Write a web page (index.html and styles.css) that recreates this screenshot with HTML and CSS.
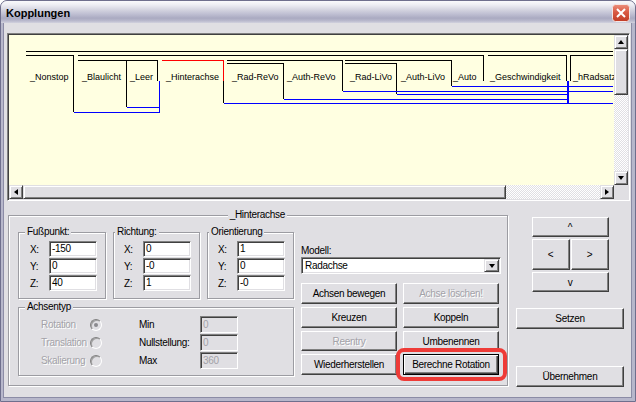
FILE: index.html
```html
<!DOCTYPE html>
<html>
<head>
<meta charset="utf-8">
<link rel="stylesheet" href="styles.css">
</head>
<body>
<div class="window">
  <div class="titlebar">
    <span class="title">Kopplungen</span>
    <span class="close">
      <svg width="18" height="18" viewBox="0 0 18 18">
        <defs>
          <linearGradient id="cg" x1="0" y1="0" x2="0" y2="1">
            <stop offset="0" stop-color="#ec8f7c"/>
            <stop offset="0.45" stop-color="#d95a43"/>
            <stop offset="1" stop-color="#c13c25"/>
          </linearGradient>
        </defs>
        <rect x="0.5" y="0.5" width="17" height="17" rx="3" fill="url(#cg)" stroke="#f4e6e4"/>
        <path d="M5 5L13 13M13 5L5 13" stroke="#fff" stroke-width="2"/>
      </svg>
    </span>
  </div>
  <div class="frame">
    <div class="client">
      <div class="diagram">
        <div class="canvas">
          <svg class="links" width="605" height="150" viewBox="9 35 605 150">
            <g class="ln black">
              <path d="M26 51.5H613"/>
              <path d="M26 55.5H73.5V112"/>
              <path d="M78 55.5H483.5V81"/>
              <path d="M488 55.5H566.5V81"/>
              <path d="M570.5 81V55.5H613"/>
              <path d="M78 60.5H157.5V81"/>
              <path d="M126.5 60.5V107"/>
              <path d="M227 60.5H342.5V91"/>
              <path d="M227 63.5H283.5V99"/>
              <path d="M345 60.5H451.5V86"/>
              <path d="M345 63.5H396.5V94"/>
              <path d="M223.5 81V103"/>
            </g>
            <g class="ln blue">
              <path d="M73.5 112.5H159.5V81"/>
              <path d="M126.5 107.5H159.5"/>
              <path d="M223.5 103.5H613"/>
              <path d="M283.5 99.5H568"/>
              <path d="M342.5 91.5H613"/>
              <path d="M396.5 94.5H568"/>
              <path d="M451.5 86.5H613"/>
              <path class="thick" d="M568 81V104"/>
            </g>
            <g class="ln red">
              <path d="M162 60.5H223.5V81"/>
            </g>
            <g class="node">
              <text x="30" y="80">_Nonstop</text>
              <text x="82" y="80">_Blaulicht</text>
              <text x="130" y="80">_Leer</text>
              <text x="166" y="80">_Hinterachse</text>
              <text x="232" y="80">_Rad-ReVo</text>
              <text x="287" y="80">_Auth-ReVo</text>
              <text x="350" y="80">_Rad-LiVo</text>
              <text x="401" y="80">_Auth-LiVo</text>
              <text x="453" y="80">_Auto</text>
              <text x="490" y="80">_Geschwindigkeit</text>
              <text x="573" y="80">_hRadsatz</text>
            </g>
          </svg>
        </div>
        <div class="vscroll">
          <div class="sbtn"><i class="tri up"></i></div>
          <div class="thumb v"></div>
          <div class="track"></div>
          <div class="sbtn"><i class="tri down"></i></div>
        </div>
        <div class="hscroll">
          <div class="sbtn"><i class="tri left"></i></div>
          <div class="thumb h"></div>
          <div class="track"></div>
          <div class="sbtn"><i class="tri right"></i></div>
        </div>
        <div class="corner"></div>
      </div>

      <div class="lower">
        <fieldset class="group main">
          <legend>_Hinterachse</legend>
          <div class="main-body">
            <div class="left-col">
              <div class="vec-row">
                <fieldset class="group vec f">
                  <legend>Fußpunkt:</legend>
                  <div class="vec-grid">
                    <span>X:</span><span class="field">-150</span>
                    <span>Y:</span><span class="field">0</span>
                    <span>Z:</span><span class="field">40</span>
                  </div>
                </fieldset>
                <fieldset class="group vec r">
                  <legend>Richtung:</legend>
                  <div class="vec-grid">
                    <span>X:</span><span class="field">0</span>
                    <span>Y:</span><span class="field">-0</span>
                    <span>Z:</span><span class="field">1</span>
                  </div>
                </fieldset>
                <fieldset class="group vec o">
                  <legend>Orientierung</legend>
                  <div class="vec-grid">
                    <span>X:</span><span class="field">1</span>
                    <span>Y:</span><span class="field">0</span>
                    <span>Z:</span><span class="field">-0</span>
                  </div>
                </fieldset>
              </div>
              <fieldset class="group achsen">
                <legend>Achsentyp</legend>
                <div class="achsen-grid">
                  <span class="dis">Rotation</span><span class="radio checked"></span><span>Min</span><span class="field dfield">0</span>
                  <span class="dis">Translation</span><span class="radio"></span><span>Nullstellung:</span><span class="field dfield">0</span>
                  <span class="dis">Skalierung</span><span class="radio"></span><span>Max</span><span class="field dfield">360</span>
                </div>
              </fieldset>
            </div>
            <div class="right-col">
              <div class="lbl">Modell:</div>
              <div class="combo"><span class="combo-text">Radachse</span><span class="ddbtn"><i class="tri down"></i></span></div>
              <div class="btn-grid">
                <div class="btn">Achsen bewegen</div>
                <div class="btn dis">Achse löschen!</div>
                <div class="btn">Kreuzen</div>
                <div class="btn">Koppeln</div>
                <div class="btn dis">Reentry</div>
                <div class="btn">Umbenennen</div>
                <div class="btn">Wiederherstellen</div>
                <div class="btn def">Berechne Rotation</div>
              </div>
            </div>
          </div>
        </fieldset>
        <div class="side">
          <div class="pad">
            <div class="btn wide">^</div>
            <div class="btn">&lt;</div>
            <div class="btn">&gt;</div>
            <div class="btn wide">v</div>
          </div>
          <div class="btn setzen">Setzen</div>
          <div class="btn uebern">Übernehmen</div>
        </div>
      </div>
    </div>
  </div>
</div>
</body>
</html>
```
FILE: styles.css
```css
* { box-sizing: border-box; }
html, body { margin: 0; padding: 0; }
body {
  width: 636px; height: 402px; overflow: hidden;
  background: #ffffff;
  font-family: "Liberation Sans", Arial, sans-serif;
  font-size: 10px; letter-spacing: -0.3px; color: #000;
}
.window {
  width: 636px; height: 402px;
  display: flex; flex-direction: column;
  border: 1px solid #6f6f8d;
  border-radius: 7px 7px 0 0;
  background: #b7b7cb;
  overflow: hidden;
}
.titlebar {
  height: 22px; flex: none;
  display: flex; align-items: center;
  padding: 2px 5px 0 5px;
  background: linear-gradient(to bottom, #fafafc 0%, #ededf3 18%, #d4d4e0 40%, #bcbcd0 62%, #aaaac1 78%, #b9b9cd 90%, #d2d2de 100%);
}
.title { font-weight: bold; font-size: 11px; letter-spacing: 0; color: #000; }
.close { margin-left: auto; width: 18px; height: 18px; display: block; }
.close svg { display: block; }

.frame { flex: 1; display: flex; padding: 0 3px 3px 2px; }
.client {
  flex: 1; display: flex; flex-direction: column;
  background: #e0dfe3;
  border: 1px solid #8c8ca6; border-top: 0;
}

/* diagram panel */
.diagram {
  margin: 10px 0 0 3px;
  width: 623px; height: 168px; flex: none;
  display: grid;
  grid-template-columns: 605px 14px;
  grid-template-rows: 150px 14px;
  border: 1px solid; border-color: #808080 #ffffff #ffffff #808080;
  padding: 1px;
  box-shadow: inset 1px 1px #404040, inset -1px -1px #e0dfe3;
}
.canvas { background: #ffffe1; overflow: hidden; }
.links { display: block; }
.ln { fill: none; stroke-width: 1; shape-rendering: crispEdges; }
.ln.black { stroke: #000; }
.ln.blue { stroke: #0000ff; }
.ln.red { stroke: #ff0000; }
.ln .thick { stroke-width: 2; }
.node { font-family: "Liberation Sans", Arial, sans-serif; font-size: 9px; letter-spacing: 0; fill: #000; }

.vscroll { display: flex; flex-direction: column; }
.hscroll { display: flex; }
.corner { background: #e0dfe3; }
.sbtn, .thumb {
  background: #e0dfe3;
  border: 1px solid; border-color: #e0dfe3 #404040 #404040 #e0dfe3;
  box-shadow: inset 1px 1px #ffffff, inset -1px -1px #808080;
}
.sbtn { width: 14px; height: 14px; flex: none; display: flex; align-items: center; justify-content: center; }
.thumb.v { height: 46px; flex: none; }
.thumb.h { width: 483px; flex: none; }
.track { flex: 1; background: repeating-conic-gradient(#ffffff 0 25%, #e0dfe3 0 50%) 0 0 / 2px 2px; }

.tri { display: block; width: 0; height: 0; border-style: solid; }
.tri.up { border-width: 0 3.5px 4px 3.5px; border-color: transparent transparent #000 transparent; }
.tri.down { border-width: 4px 3.5px 0 3.5px; border-color: #000 transparent transparent transparent; }
.tri.left { border-width: 3.5px 4px 3.5px 0; border-color: transparent #000 transparent transparent; }
.tri.right { border-width: 3.5px 0 3.5px 4px; border-color: transparent transparent transparent #000; }

/* lower area */
.lower { display: flex; gap: 8px; margin: 8px 0 0 4px; }
.group {
  margin: 0; padding: 0; min-width: 0;
  border: 1px solid #9c9ca2;
  box-shadow: inset 1px 1px #ffffff, 1px 1px #ffffff;
}
.group > legend {
  padding: 0 2px; line-height: 12px; font-size: 10px;
  background: #e0dfe3;
}
.main { width: 500px; height: 177px; flex: none; }
.main > legend { margin-left: auto; margin-right: 220px; }
.main-body {
  display: grid;
  grid-template-columns: 276px 200px;
  column-gap: 7px;
  padding: 5px 0 0 9px;
}
.vec-row { display: flex; gap: 7px; }
.vec { height: 73px; flex: none; }
.vec.f { width: 88px; }
.vec.r, .vec.o { width: 87px; }
.vec.f > legend { margin-left: 6px; }
.vec.r > legend, .vec.o > legend { margin-left: 1px; }
.vec-grid {
  display: grid;
  grid-template-columns: 19px 48px;
  grid-auto-rows: 16px;
  row-gap: 1px;
  align-items: center;
  padding: 3px 0 0 10px;
}
.vec.f .vec-grid { padding-left: 11px; }

.field {
  display: block; width: 48px; height: 16px;
  background: #ffffff;
  border: 1px solid; border-color: #808080 #ffffff #ffffff #808080;
  box-shadow: inset 1px 1px #404040, inset -1px -1px #e0dfe3;
  padding: 0 0 0 2px; line-height: 14px;
  overflow: hidden; white-space: nowrap;
}
.field.dfield { width: 38px; height: 17px; line-height: 15px; background: #e0dfe3; color: #a3a2a8; }

.achsen { margin-top: 2px; height: 75px; width: 276px; }
.achsen > legend { margin-left: 6px; }
.achsen-grid {
  display: grid;
  grid-template-columns: 49px 49px 61px 38px;
  grid-auto-rows: 17px;
  row-gap: 1px;
  align-items: center;
  padding: 3px 0 0 22px;
  white-space: nowrap;
}
.dis { color: #a3a2a8; text-shadow: 1px 1px #ffffff; }
.radio {
  display: block; width: 12px; height: 12px; border-radius: 50%;
  border: 1px solid; border-color: #808080 #ffffff #ffffff #808080;
  box-shadow: inset 1px 1px #a0a0a0;
  background: #e0dfe3;
  position: relative;
}
.radio.checked::after {
  content: ""; position: absolute; left: 3px; top: 3px;
  width: 4px; height: 4px; border-radius: 50%; background: #8a8a8e;
}

.right-col { padding-top: 19px; }
.lbl { line-height: 12px; }
.combo {
  width: 200px; height: 17px;
  display: flex; align-items: center;
  background: #ffffff;
  border: 1px solid; border-color: #808080 #ffffff #ffffff #808080;
  box-shadow: inset 1px 1px #404040, inset -1px -1px #e0dfe3;
  padding: 1px;
}
.combo-text { padding-left: 2px; line-height: 13px; }
.ddbtn {
  margin-left: auto; width: 15px; height: 13px;
  display: flex; align-items: center; justify-content: center;
  background: #e0dfe3;
  border: 1px solid; border-color: #e0dfe3 #404040 #404040 #e0dfe3;
  box-shadow: inset 1px 1px #ffffff, inset -1px -1px #808080;
}
.btn-grid {
  display: grid;
  grid-template-columns: 96px 96px;
  grid-template-rows: 21px 21px 20px 21px;
  column-gap: 6px; row-gap: 3px;
  margin-top: 9px;
}
.btn {
  display: flex; align-items: center; justify-content: center;
  background: #e0dfe3;
  border: 1px solid; border-color: #ffffff #404040 #404040 #ffffff;
  box-shadow: inset -1px -1px #808080;
  white-space: nowrap;
}
.btn.dis { color: #a3a2a8; text-shadow: 1px 1px #ffffff; }
.btn.def {
  position: relative;
  border-color: #000;
  box-shadow: inset 1px 1px #ffffff, inset -1px -1px #404040, inset -2px -2px #808080;
}
.btn.def::after {
  content: ""; position: absolute;
  top: -7px; bottom: -7px; left: -8px; right: -9px;
  border: 4px solid #ee3b37; border-radius: 8px;
}

.side {
  width: 108px; flex: none;
  display: flex; flex-direction: column; align-items: center;
  padding-top: 8px;
}
.pad {
  display: grid;
  grid-template-columns: 38px 38px;
  grid-template-rows: 20px 31px 20px;
  column-gap: 1px; row-gap: 2px;
}
.pad .wide { grid-column: 1 / 3; }
.side > .btn { width: 108px; height: 21px; }
.setzen { margin-top: 16px; }
.uebern { margin-top: 37px; }
```
